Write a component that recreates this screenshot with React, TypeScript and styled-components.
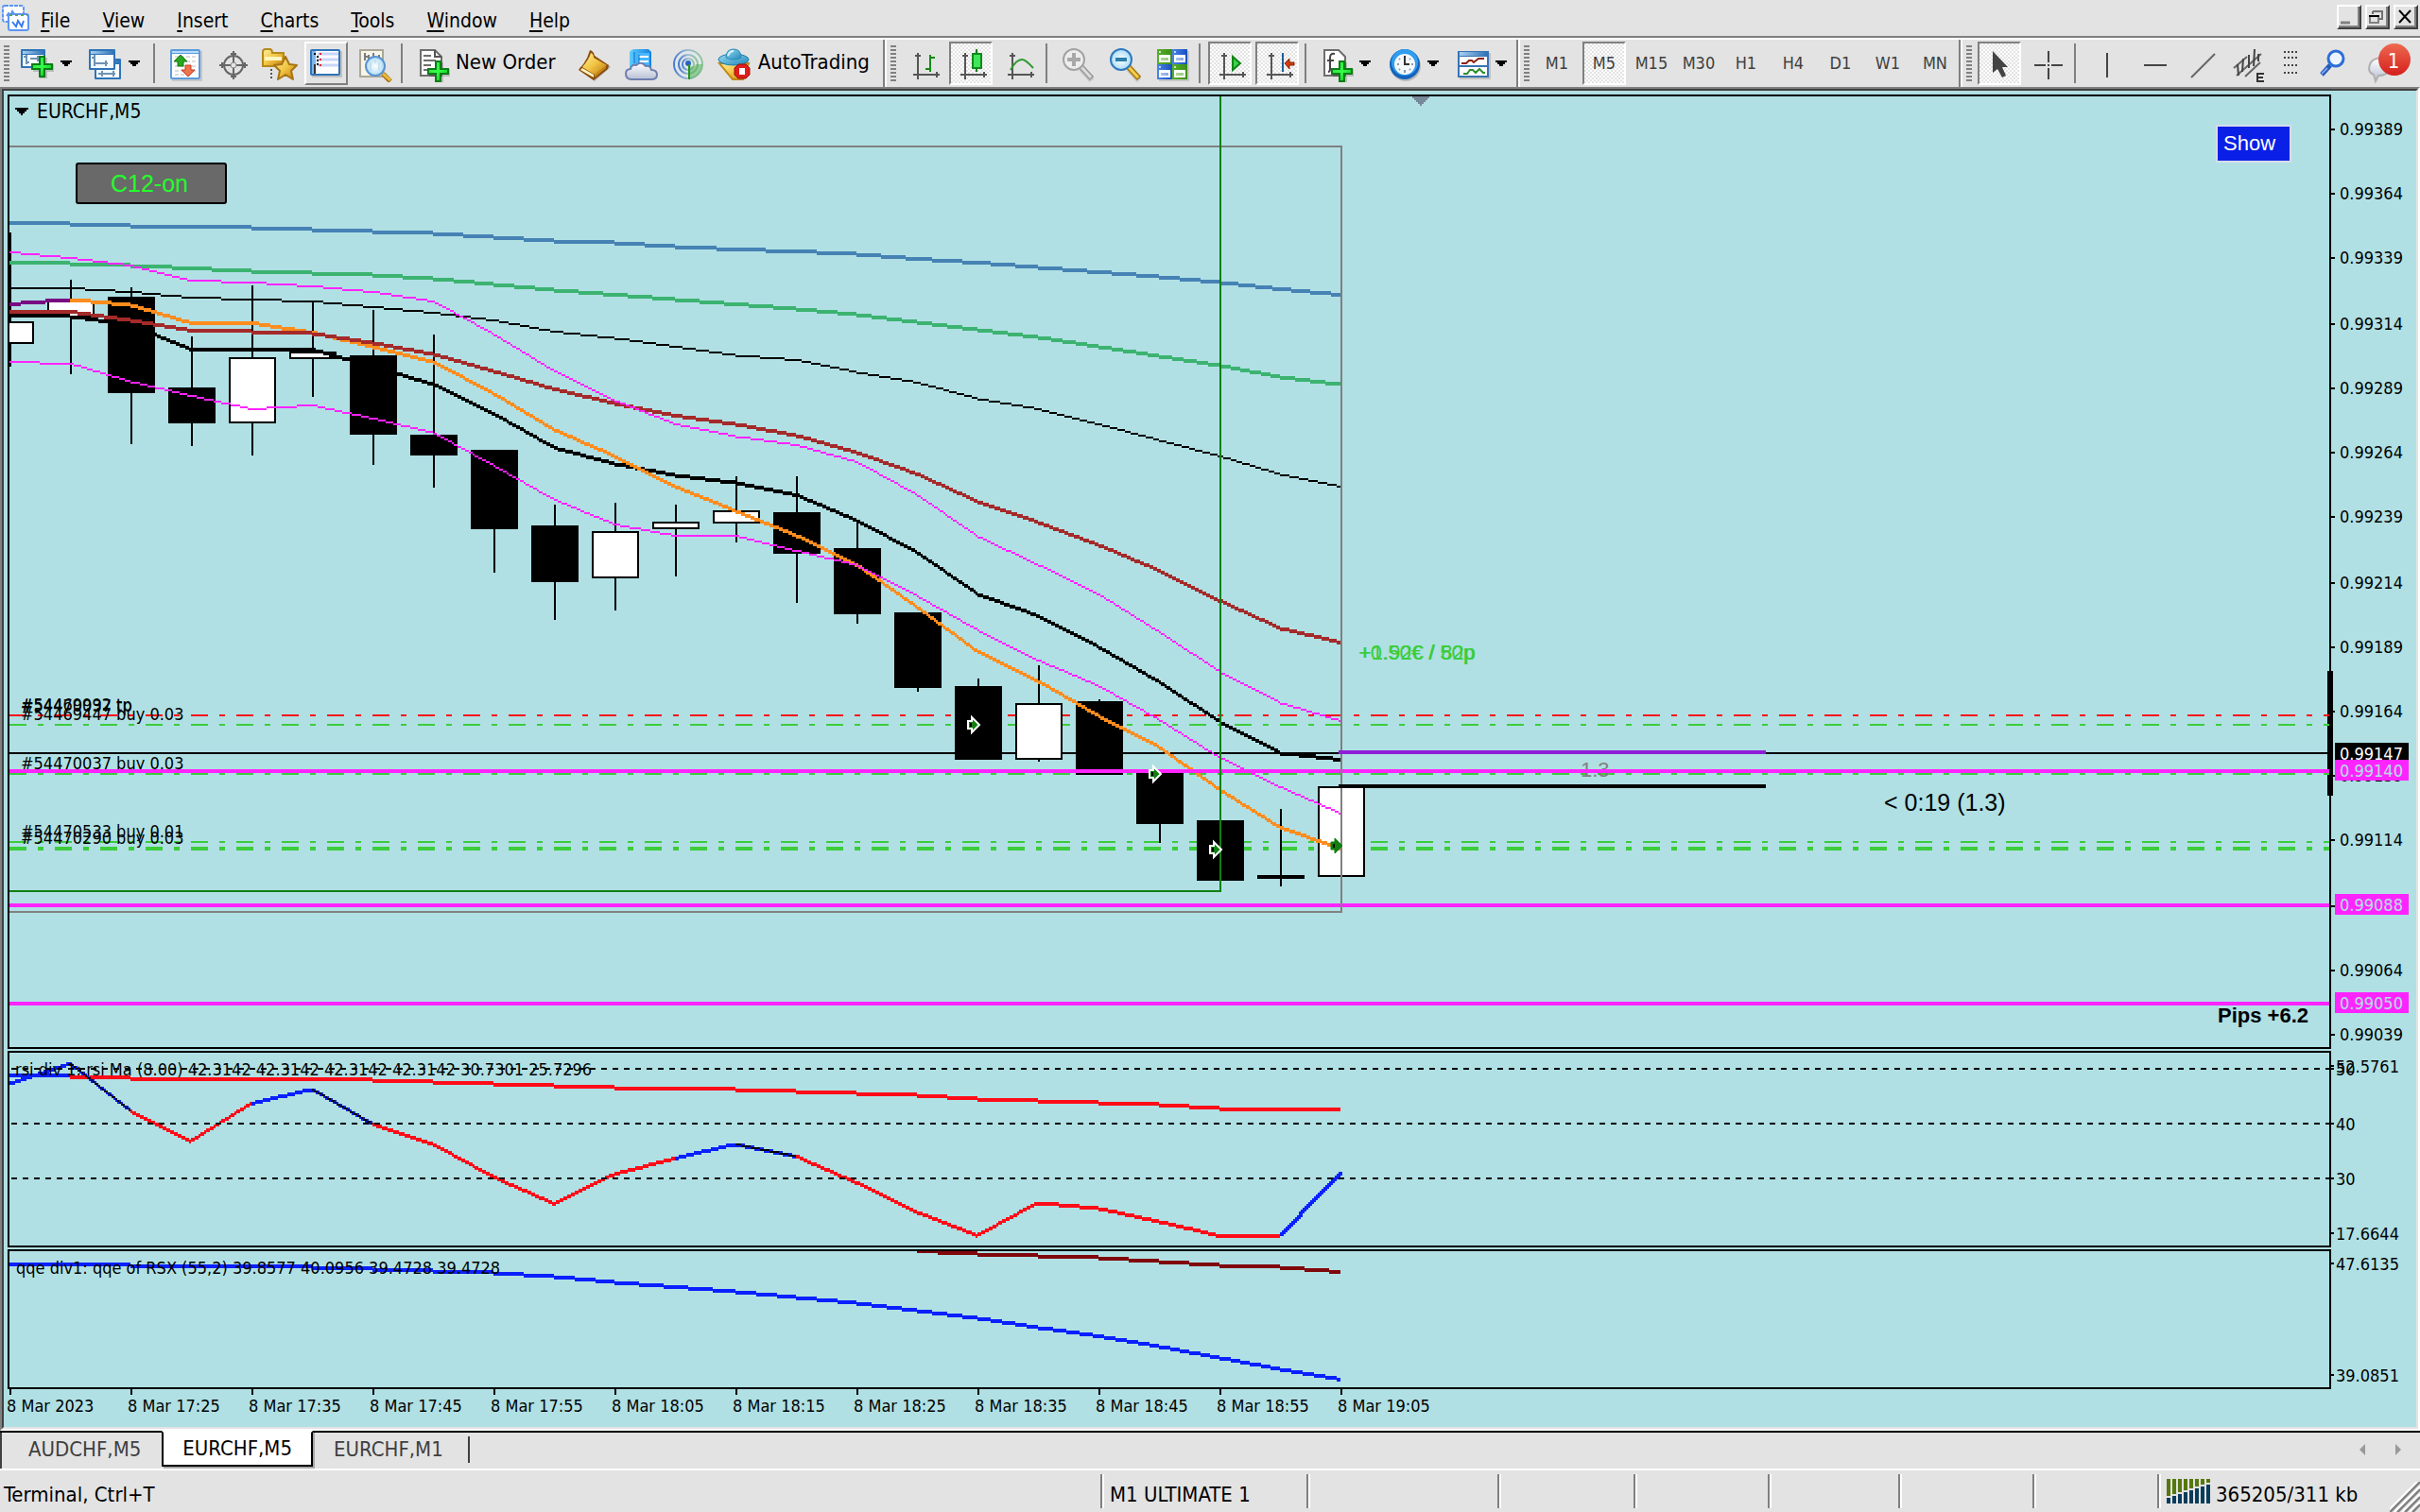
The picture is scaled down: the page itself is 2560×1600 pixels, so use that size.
import React from 'react';
import styled, { createGlobalStyle, css } from 'styled-components';

const UI_FONT = `"DejaVu Sans Condensed", "DejaVu Sans", Tahoma, sans-serif`;
const LABEL_FONT = `"Liberation Sans", Arial, sans-serif`;

const C = {
  face: '#e3e3e3',
  shade: '#808080',
  dark: '#404040',
  chart: '#b0e0e4',
  magenta: '#ff24ff',
  red: '#ff0c18',
  lime: '#3ccc3c',
  green: '#108010',
  blue: '#0a20ff',
};

const GlobalStyle = createGlobalStyle`
  *, *::before, *::after { box-sizing: border-box; }
  html, body { margin: 0; padding: 0; background: ${C.face}; }
  button { font: inherit; color: inherit; background: none; border: 0; padding: 0; margin: 0; cursor: default; }
`;

const Shell = styled.div`
  display: flex;
  flex-direction: column;
  min-height: 100vh;
  background: ${C.face};
  color: #000;
  font-family: ${UI_FONT};
  font-size: 22px;
  line-height: 26px;
`;

/* ---------- menu bar ---------- */

const MenuBar = styled.header`
  display: flex;
  align-items: center;
  height: 42px;
  padding: 0 2px 4px;
  border-bottom: 2px solid #fff;
  box-shadow: inset 0 -2px 0 ${C.shade};
`;

const AppIcon = styled.svg`
  width: 30px;
  height: 30px;
  flex: none;
`;

const MenuNav = styled.nav`
  display: flex;
  flex: 1;
  padding: 8px 0 0;
  margin-left: -6px;
  font-size: 21px;
`;

const MenuItem = styled.button`
  padding: 0 17px;
  white-space: nowrap;
`;

const Mnemonic = styled.span`
  text-decoration: underline;
  text-decoration-thickness: 2px;
  text-underline-offset: 3px;
`;

const MdiButtons = styled.div`
  display: flex;
  gap: 4px;
`;

const MdiButton = styled.button`
  width: 26px;
  height: 26px;
  background: ${C.face};
  border-style: solid;
  border-width: 2px;
  border-color: #fff ${C.dark} ${C.dark} #fff;
  box-shadow: inset -2px -2px 0 ${C.shade};
  svg { display: block; width: 22px; height: 22px; }
`;

/* ---------- toolbar ---------- */

const Toolbar = styled.div`
  display: flex;
  height: 50px;
`;

const Band = styled.div<{ $first?: boolean; $last?: boolean }>`
  display: flex;
  align-items: center;
  gap: 4px;
  padding: 0 2px 0 4px;
  border-left: ${p => (p.$first ? '0' : '2px solid #fff')};
  border-right: ${p => (p.$last ? '0' : `2px solid ${C.shade}`)};
  flex: ${p => (p.$last ? '1' : 'none')};
`;

const Grip = styled.div`
  width: 6px;
  height: 38px;
  margin-right: 2px;
  background: repeating-linear-gradient(${C.shade} 0 2px, transparent 2px 4px);
`;

const Divider = styled.div`
  width: 2px;
  height: 42px;
  margin: 0 4px 0 2px;
  background: ${C.shade};
`;

const pressedLook = css`
  border-color: ${C.shade} #fff #fff ${C.shade};
  background: repeating-conic-gradient(#fff 0 25%, ${C.face} 0 50%) 0 0 / 4px 4px;
`;

const ToolButton = styled.button<{ $w?: number; $look?: 'pressed' | 'raised' }>`
  display: flex;
  align-items: center;
  justify-content: center;
  flex: none;
  width: ${p => p.$w ?? 46}px;
  height: 46px;
  border: 2px solid transparent;
  svg { display: block; flex: none; }
  ${p => p.$look === 'pressed' && pressedLook}
  ${p => p.$look === 'raised' && css`border-color: #fff ${C.shade} ${C.shade} #fff;`}
`;

const DropButton = styled.button`
  display: flex;
  align-items: center;
  gap: 4px;
  width: 68px;
  height: 46px;
  padding-left: 4px;
  svg { display: block; flex: none; }
`;

const TextButton = styled.button`
  display: flex;
  align-items: center;
  gap: 4px;
  height: 46px;
  padding: 0 12px 0 4px;
  white-space: nowrap;
  svg { display: block; }
  span { padding-bottom: 2px; }
`;

const PeriodButton = styled(ToolButton)`
  font-size: 18px;
  color: ${C.dark};
`;

const Icon = ({ w = 40, children }: { w?: number; children: React.ReactNode }) => (
  <svg width={w} height={40} viewBox={`0 0 ${w} 40`} aria-hidden="true">{children}</svg>
);

const Caret = () => (
  <svg width="12" height="6" viewBox="0 0 12 6" aria-hidden="true" shapeRendering="crispEdges">
    <path d="M0 0h12v2h-2v2h-2v2h-4v-2h-2v-2h-2z" />
  </svg>
);

const GradientDefs = styled.svg`
  position: absolute;
  width: 0;
  height: 0;
`;

const Gradients = () => (
  <GradientDefs aria-hidden="true">
    <defs>
      <linearGradient id="gPlus" x1="0" y1="0" x2="1" y2="1"><stop offset="0" stopColor="#2fd83a" /><stop offset=".5" stopColor="#34ff48" /><stop offset="1" stopColor="#0fae1c" /></linearGradient>
      <linearGradient id="gBlueBar" x1="0" y1="0" x2="1" y2="0"><stop offset="0" stopColor="#a9d0f2" /><stop offset="1" stopColor="#2f74b8" /></linearGradient>
      <linearGradient id="gGold" x1="0" y1="0" x2="1" y2="1"><stop offset="0" stopColor="#fff0a0" /><stop offset=".5" stopColor="#f2c544" /><stop offset="1" stopColor="#b9770e" /></linearGradient>
      <linearGradient id="gCloud" x1="0" y1="0" x2="0" y2="1"><stop offset="0" stopColor="#ffffff" /><stop offset="1" stopColor="#b7bfd4" /></linearGradient>
      <linearGradient id="gServer" x1="0" y1="0" x2="1" y2="0"><stop offset="0" stopColor="#5ecbff" /><stop offset="1" stopColor="#1482dd" /></linearGradient>
      <linearGradient id="gSignal" x1="0" y1="0" x2="1" y2="0"><stop offset="0" stopColor="#4a7ccc" /><stop offset=".5" stopColor="#a3bdd0" /><stop offset="1" stopColor="#8fc49a" /></linearGradient>
      <radialGradient id="gLens"><stop offset="0" stopColor="#ffffff" /><stop offset="1" stopColor="#a9dcfa" /></radialGradient>
      <linearGradient id="gBadge" x1="0" y1="0" x2="0" y2="1"><stop offset="0" stopColor="#ee6a50" /><stop offset="1" stopColor="#d41f1c" /></linearGradient>
      <linearGradient id="gHat" x1="0" y1="0" x2="1" y2="1"><stop offset="0" stopColor="#9adcf5" /><stop offset="1" stopColor="#1f87b8" /></linearGradient>
      <linearGradient id="gTileG" x1="0" y1="0" x2="1" y2="0"><stop offset="0" stopColor="#56b02a" /><stop offset="1" stopColor="#3d8f16" /></linearGradient>
      <linearGradient id="gTileB" x1="0" y1="0" x2="1" y2="0"><stop offset="0" stopColor="#4a86e8" /><stop offset="1" stopColor="#164fc0" /></linearGradient>
    </defs>
  </GradientDefs>
);

const Plus = ({ x, y }: { x: number; y: number }) => (
  <g transform={`translate(${x} ${y})`}>
    <path d="M9 2h8v7h7v8h-7v7h-8v-7h-7v-8h7z" fill="#000" opacity=".18" />
    <path d="M8 0h7v8h8v7h-8v8h-7v-8h-8v-7h8z" fill="#0b7d17" />
    <path d="M10 2h3v8h8v3h-8v8h-3v-8h-8v-3h8z" fill="url(#gPlus)" />
  </g>
);

const MiniWindow = ({ x, y, w, h }: { x: number; y: number; w: number; h: number }) => (
  <g>
    <rect x={x} y={y} width={w} height={h} rx="1" fill="#2f74b8" />
    <rect x={x + 2} y={y + 2} width={w - 4} height="3" fill="url(#gBlueBar)" />
    <rect x={x + 2} y={y + 6} width={w - 4} height={h - 8} fill="#f6fbff" />
  </g>
);

const IconNewChart = () => (
  <Icon>
    <MiniWindow x={2} y={5} w={26} h={20} />
    <path d="M8 11v10M5 13h3M8 19h3M12 15h10M20 12v6" stroke="#6f93b3" strokeWidth="2" fill="none" />
    <Plus x={13} y={12} />
  </Icon>
);
const IconProfiles = () => (
  <Icon>
    <MiniWindow x={8} y={15} w={28} h={22} />
    <path d="M12 31h18M16 28v6M28 28v6" stroke="#6f93b3" strokeWidth="2" />
    <MiniWindow x={2} y={5} w={28} h={22} />
    <path d="M8 11v12M5 14h3M8 20h14M20 17v6" stroke="#6f93b3" strokeWidth="2" fill="none" />
  </Icon>
);
const IconMarketWatch = () => (
  <Icon>
    <rect x="7" y="7" width="32" height="32" fill="#000" opacity=".12" />
    <rect x="5" y="5" width="32" height="32" rx="2" fill="#5a9bdc" />
    <rect x="7" y="7" width="28" height="2" fill="#b5dbff" />
    <rect x="7" y="10" width="28" height="25" fill="#fff" />
    <path d="M10 13h22M10 18h22M10 23h22M10 28h22M10 32h12" stroke="#dcdcdc" strokeWidth="2" strokeDasharray="4 2" />
    <path d="M16 11l7 7h-4v5h-6v-5h-4z" fill="#2aa61f" stroke="#157a0e" />
    <path d="M24 34l7-7h-4v-5h-6v5h-4z" fill="#f0714c" stroke="#c43c1a" />
  </Icon>
);
const IconDataWindow = () => (
  <Icon>
    <g stroke="#666" fill="none" strokeWidth="2">
      <circle cx="22" cy="22" r="10" />
      <path d="M22 7v30M7 22h30" />
      <path d="M19 10h6M19 34h6M10 19v6M34 19v6" />
    </g>
    <circle cx="22" cy="22" r="3" fill="#e3e3e3" stroke="#888" />
  </Icon>
);
const IconNavigator = () => (
  <Icon>
    <path d="M3 8q0-3 3-3h4q3 0 3 4h12v14h-22z" fill="url(#gGold)" stroke="#b58a1c" strokeWidth="2" />
    <path d="M5 13h18v4h-18z" fill="#fff6bf" />
    <path d="M12 26v12" stroke="#555" strokeWidth="2" strokeDasharray="2 2" />
    <path d="M27 13l4 8 8 1-6 6 2 9-8-5-8 5 2-9-6-6 8-1z" fill="url(#gGold)" stroke="#a87412" strokeWidth="2" strokeLinejoin="round" />
  </Icon>
);
const IconTerminal = () => (
  <Icon>
    <rect x="5" y="7" width="32" height="28" fill="#000" opacity=".15" />
    <rect x="3" y="5" width="32" height="28" rx="2" fill="#2f74b8" />
    <rect x="5" y="7" width="28" height="24" fill="#fff" />
    <rect x="5" y="7" width="4" height="24" fill="#7fb6ea" />
    <rect x="7" y="21" width="2" height="10" fill="#333" />
    <path d="M11 10h22M11 16h22M11 22h22" stroke="#c9d6fb" strokeWidth="3" />
    <path d="M7 10h2M11 12v10" stroke="#000" strokeWidth="2" strokeDasharray="2 2" />
    <path d="M13 10h2M13 16h2M13 22h2" stroke="#e8202a" strokeWidth="2" />
  </Icon>
);
const IconTester = () => (
  <Icon>
    <rect x="6" y="6" width="24" height="28" fill="#f7f5ea" stroke="#aca695" strokeWidth="2" />
    <path d="M11 9v8M15 11v6M20 9v6M26 11v4M10 13h5" stroke="#7c7c7c" strokeWidth="2" />
    <path d="M30 31l8 8" stroke="#96650a" strokeWidth="5" />
    <path d="M30 31l8 7" stroke="#e9b93a" strokeWidth="3" />
    <circle cx="22" cy="23" r="10" fill="url(#gLens)" fillOpacity=".92" stroke="#5b93d0" strokeWidth="2" />
    <path d="M17 19v9M22 16v4M26 19v8" stroke="#b9cfe0" strokeWidth="1" />
  </Icon>
);
const PageShape = ({ x }: { x: number }) => (
  <path d={`M${x + 1} 6h15l7 7v20h-22z`} fill="#fdfdfd" stroke="#6e6e6e" strokeWidth="2" />
);
const IconNewOrder = () => (
  <Icon>
    <PageShape x={6} />
    <path d="M22 6v7h7" stroke="#555" strokeWidth="2" fill="none" />
    <path d="M10 12h8M10 17h13M10 22h8M10 27h5" stroke="#6e6e6e" strokeWidth="2" />
    <Plus x={14} y={17} />
  </Icon>
);
const IconEditor = () => (
  <Icon>
    <path d="M7 28l15 11 17-15-3-3z" fill="#000" opacity=".2" />
    <path d="M17 6q4 1 5 6l15 10-1 4-15 12-16-11q1-2 5-6 5-7 7-15z" fill="#8a4d08" />
    <path d="M18 9q3 1 3 5l14 8-13 10-13-8q7-8 9-15z" fill="url(#gGold)" />
    <path d="M7 27l14 8v-3l-12-7z" fill="#fff2c0" />
    <path d="M22 35l12-10v-2l-12 9z" fill="#c98a1a" />
  </Icon>
);
const IconServer = () => (
  <Icon>
    <path d="M9 8q2-3 5-3h15l3 3v18h-23z" fill="url(#gServer)" />
    <path d="M17 9h13v17h-13z" fill="#48b6ff" />
    <path d="M19 13h10M19 18h10" stroke="#fff" strokeWidth="2" />
    <path d="M19 11v11M14 8v12" stroke="#0d6fc6" strokeWidth="1" />
    <path d="M11 37q-6 0-6-6 0-5 5-5 1-5 6-4 5-5 10 1 5-1 6 4 6 0 6 5t-6 5z" fill="url(#gCloud)" stroke="#6f7fae" strokeWidth="2" />
  </Icon>
);
const IconSignals = () => (
  <Icon>
    <circle cx="21" cy="21" r="16" fill="#dfeaf0" opacity=".7" />
    <g fill="none" stroke="url(#gSignal)" strokeWidth="2">
      <circle cx="21" cy="21" r="15" /><circle cx="21" cy="21" r="10" /><circle cx="21" cy="21" r="6" />
    </g>
    <path d="M22 22v15q12-2 14-16h-7q-1 5-7 1z" fill="#46ad46" opacity=".5" />
    <circle cx="21" cy="20" r="3" fill="#2a62c8" />
    <path d="M22 21v16" stroke="#22961f" strokeWidth="2" />
  </Icon>
);
const IconAutoTrading = () => (
  <Icon>
    <path d="M3 20h31l-6 17h-11z" fill="url(#gGold)" stroke="#c08a18" strokeWidth="2" />
    <ellipse cx="18" cy="16" rx="16" ry="6" fill="url(#gHat)" stroke="#1f7ba8" strokeWidth="1" />
    <path d="M10 14q0-9 8-9t8 9q-8 4-16 0z" fill="url(#gHat)" stroke="#2b8ab5" strokeWidth="1" />
    <path d="M12 12q2-5 6-5" stroke="#d8f4ff" strokeWidth="2" fill="none" />
    <path d="M23 21h8l4 4v7l-4 4h-8l-4-4v-7z" fill="#e0201c" stroke="#a30f0c" strokeWidth="1" />
    <rect x="24" y="25" width="6" height="7" fill="#fff" />
  </Icon>
);

const Axes = () => (
  <path d="M14 9v28M9 32h28M11 12h6M34 29v6" stroke="#555" strokeWidth="2" fill="none" shapeRendering="crispEdges" />
);
const IconBars = () => (
  <Icon><Axes /><path d="M27 11v18M27 14h5M22 26h5" stroke="#148a14" strokeWidth="2" fill="none" shapeRendering="crispEdges" /></Icon>
);
const IconCandles = () => (
  <Icon><Axes /><path d="M26 5v24" stroke="#0f7a16" strokeWidth="2" /><rect x="22" y="10" width="9" height="15" fill="#3fe65a" stroke="#0f8a1a" strokeWidth="2" /></Icon>
);
const IconLine = () => (
  <Icon><Axes /><path d="M12 27q6-11 12-11 4 0 12 9" stroke="#2f9a2f" strokeWidth="2" fill="none" /></Icon>
);
const Magnifier = ({ on }: { on: boolean }) => (
  <Icon>
    <path d="M25 26l11 12" stroke="#000" opacity=".12" strokeWidth="6" />
    <path d="M25 24l11 12" stroke={on ? '#a9740f' : '#9a9a9a'} strokeWidth="6" />
    <path d="M25 24l10 11" stroke={on ? '#f3cf4b' : '#dcdcdc'} strokeWidth="3" />
    <circle cx="17" cy="16" r="11" fill={on ? 'url(#gLens)' : '#ededed'} stroke={on ? '#2f79bd' : '#a3a3a3'} strokeWidth="2" />
    {on ? <path d="M11 16h12" stroke="#2b7fa8" strokeWidth="4" /> : <path d="M10 16h14M17 9v14" stroke="#a8a8a8" strokeWidth="4" />}
  </Icon>
);
const Tile = ({ x, y, g }: { x: number; y: number; g: string }) => (
  <g>
    <rect x={x} y={y} width="16" height="16" fill={`url(#${g})`} />
    <rect x={x + 2} y={y + 2} width="2" height="2" fill="#fff" opacity=".7" />
    <rect x={x + 2} y={y + 6} width="12" height="8" fill="#fff" />
    <rect x={x + 4} y={y + 9} width="8" height="3" fill={`url(#${g})`} opacity=".5" />
  </g>
);
const IconTile = () => (
  <Icon>
    <rect x="7" y="7" width="32" height="32" fill="#000" opacity=".12" />
    <Tile x={5} y={5} g="gTileG" /><Tile x={21} y={5} g="gTileB" /><Tile x={5} y={21} g="gTileB" /><Tile x={21} y={21} g="gTileG" />
  </Icon>
);
const IconAutoScroll = () => (
  <Icon><Axes /><path d="M23 13v14l8-7z" fill="#3fd04a" stroke="#118518" strokeWidth="2" /></Icon>
);
const IconShift = () => (
  <Icon><Axes /><path d="M26 9v20" stroke="#1d5f96" strokeWidth="2" /><path d="M28 20l5-5v4h5v3h-5v4z" fill="#cf3d12" stroke="#8b2308" strokeWidth="1" /></Icon>
);
const IconIndicators = () => (
  <Icon>
    <PageShape x={6} />
    <path d="M18 10q-5-1-5 4v12q0 3-2 3M10 17h7" stroke="#444" strokeWidth="2" fill="none" />
    <Plus x={14} y={17} />
  </Icon>
);
const IconPeriods = () => (
  <Icon>
    <ellipse cx="21" cy="23" rx="16" ry="16" fill="#000" opacity=".18" />
    <circle cx="20" cy="21" r="16" fill="#1463bd" />
    <circle cx="20" cy="19" r="14" fill="#2f9df0" />
    <circle cx="20" cy="21" r="11" fill="#f4f8fb" />
    <path d="M20 12v9h5" stroke="#333" strokeWidth="2" fill="none" />
    <path d="M20 27v3M12 21h2M27 21h2M14 15l1 1M26 15l-1 1M14 27l1-1M26 27l-1-1" stroke="#8a9aa8" strokeWidth="2" />
  </Icon>
);
const IconTemplates = () => (
  <Icon>
    <rect x="6" y="9" width="33" height="28" fill="#000" opacity=".15" />
    <rect x="4" y="7" width="33" height="28" fill="#3873b3" />
    <rect x="6" y="8" width="29" height="4" fill="url(#gBlueBar)" />
    <rect x="6" y="13" width="29" height="9" fill="#fff" />
    <rect x="6" y="24" width="29" height="9" fill="#fff" />
    <path d="M8 20h5l3-3h3l2 2 5-4h6" stroke="#8a2313" strokeWidth="2" fill="none" />
    <path d="M10 31h4l3-4h3l3 3 4-4 4 4h2" stroke="#2c8f2c" strokeWidth="2" fill="none" />
  </Icon>
);
const IconCursor = () => (
  <Icon><path d="M13 7v23l5-4 5 9 4-2-4-9h6z" fill="#444" /></Icon>
);
const IconCross = () => (
  <Icon><path d="M22 7v12M22 25v12M7 22h12M25 22h12M21 22h2" stroke="#444" strokeWidth="2" shapeRendering="crispEdges" /></Icon>
);
const IconVLine = () => (<Icon><path d="M22 9v26" stroke="#444" strokeWidth="2" shapeRendering="crispEdges" /></Icon>);
const IconHLine = () => (<Icon><path d="M11 22h24" stroke="#444" strokeWidth="2" shapeRendering="crispEdges" /></Icon>);
const IconTrend = () => (<Icon><path d="M11 35l25-25" stroke="#666" strokeWidth="2" /></Icon>);
const IconChannel = () => (
  <Icon>
    <path d="M6 25l14-12M9 33l26-23M18 34l16-15" stroke="#666" strokeWidth="2" />
    <path d="M10 21l1 12M16 15l-1 14M22 11v14M28 5l-1 18M32 10v8" stroke="#444" strokeWidth="2" />
    <path d="M38 31h-7v8h7M31 35h6" stroke="#333" strokeWidth="2" fill="none" shapeRendering="crispEdges" />
  </Icon>
);
const IconFibo = () => (
  <Icon w={30}>
    <path d="M9 8h14M9 14h14M9 22h14M9 30h14" stroke="#444" strokeWidth="2" strokeDasharray="2 2" shapeRendering="crispEdges" />
  </Icon>
);
const IconSearch = () => (
  <Icon>
    <path d="M18 22l-9 10" stroke="#2659b8" strokeWidth="5" />
    <path d="M15 25l-6 6" stroke="#7ba5ea" strokeWidth="2" />
    <circle cx="24" cy="15" r="8" fill="#eef4ff" stroke="#2b6fd6" strokeWidth="3" />
  </Icon>
);
const IconAlerts = () => (
  <svg width="60" height="46" viewBox="0 0 60 46" aria-hidden="true">
    <path d="M14 22q5-6 14-4 8 3 6 12-3 6-12 6l-3 6-2-7q-8-3-3-13z" fill="url(#gCloud)" stroke="#b0b0b0" strokeWidth="2" />
    <circle cx="39" cy="19" r="17" fill="url(#gBadge)" />
    <text x="38" y="28" fill="#fff" textAnchor="middle" fontFamily={UI_FONT} fontSize="22">1</text>
  </svg>
);

/* ---------- chart window ---------- */

const WindowEdge = styled.div`
  display: flex;
  flex-direction: column;
  flex: 1;
  border-style: solid;
  border-width: 2px;
  border-color: ${C.shade} #fff #fff ${C.shade};
`;

const ChartWindow = styled.main`
  display: flex;
  flex-direction: column;
  flex: 1;
  min-height: 600px;
  padding: 4px 0 0 4px;
  background: ${C.chart};
  border-style: solid;
  border-width: 2px;
  border-color: ${C.dark} ${C.face} ${C.face} ${C.dark};
`;

const Pane = styled.section<{ $h?: number; $last?: boolean }>`
  display: flex;
  flex: ${p => (p.$h ? `0 0 ${p.$h}px` : '1')};
  min-height: 0;
  margin-bottom: ${p => (p.$last ? 0 : 2)}px;
`;

const Plot = styled.div`
  position: relative;
  flex: 1;
  min-width: 0;
  border: 2px solid #000;
  & > svg { position: absolute; inset: 0; width: 100%; height: 100%; }
`;

const Scale = styled.svg`
  flex: none;
  width: 90px;
  height: 100%;
  overflow: visible;
`;

const TimeScale = styled.svg`
  display: block;
  flex: none;
  width: 100%;
  height: 40px;
`;

const Caption = styled.text`
  font-family: ${UI_FONT};
  font-size: 18px;
`;

const Note = styled.text<{ $size?: number; $bold?: boolean }>`
  font-family: ${LABEL_FONT};
  font-size: ${p => p.$size ?? 22}px;
  font-weight: ${p => (p.$bold ? 700 : 400)};
`;

const ChartTitle = styled.div`
  position: absolute;
  left: 6px;
  top: 3px;
  display: flex;
  align-items: center;
  gap: 9px;
  font-size: 21px;
`;

const PanelToggle = styled.button`
  position: absolute;
  left: 70px;
  top: 70px;
  width: 160px;
  height: 44px;
  padding-right: 4px;
  border: 2px solid #000;
  border-radius: 3px;
  background: #696969;
  color: #24ff2c;
  font-family: ${LABEL_FONT};
  font-size: 25px;
`;

const ShowButton = styled.button`
  position: absolute;
  right: 40px;
  top: 30px;
  width: 80px;
  height: 40px;
  padding-left: 6px;
  border: 2px solid #d6dcec;
  background: #0a20e6;
  color: #fff;
  font-family: ${LABEL_FONT};
  font-size: 22px;
  text-align: left;
`;

/* Bars are 64px apart; the chart draws on a 2px grid. */
const barX = (i: number) => 11 + 64 * i;
const snap = (v: number) => Math.round(v / 2) * 2;

function stepPath(values: number[], thick: number, from = 0) {
  let d = '';
  for (let i = 0; i < values.length - 1; i++) {
    const x0 = snap(barX(from + i) - 1);
    const step = (values[i + 1] - values[i]) / 32;
    const wide = Math.abs(step) > 2 ? thick : 2;
    for (let n = 0; n < 32; n++) {
      const a = values[i] + step * n;
      const b = a + step;
      const lo = snap(Math.min(a, b) - thick / 2);
      const hi = Math.max(snap(Math.max(a, b) - thick / 2), lo + 2) - 2;
      d += `M${x0 + n * 2} ${lo}h${wide}v${hi - lo + thick}h${-wide}z`;
    }
  }
  return d;
}

const Series = ({ v, color, w = 4, from = 0 }: { v: number[]; color: string; w?: number; from?: number }) => (
  <path d={stepPath(v, w, from)} fill={color} shapeRendering="crispEdges" />
);

type Candle = [number, number, number, number, 0 | 1]; // high, top, bottom, low, rising
const CANDLES: Candle[] = [
  [246, 340, 364, 388, 1], [296, 318, 336, 396, 1], [304, 314, 416, 470, 0], [356, 410, 448, 472, 0],
  [302, 378, 448, 482, 1], [318, 372, 380, 420, 1], [328, 376, 460, 492, 0], [354, 460, 482, 516, 0],
  [476, 476, 560, 606, 0], [534, 556, 616, 656, 0], [532, 562, 612, 646, 1], [534, 552, 560, 610, 1],
  [504, 540, 554, 574, 1], [504, 542, 586, 638, 0], [550, 580, 650, 660, 0], [648, 648, 728, 732, 0],
  [718, 726, 804, 804, 0], [704, 744, 804, 806, 1], [740, 742, 820, 820, 0], [816, 816, 872, 892, 0],
  [868, 868, 932, 932, 0], [856, 926, 930, 938, 0], [832, 832, 928, 928, 1],
];

const MA_BLUE = [235, 237, 239, 240, 241, 243, 245, 247, 251, 255, 257, 261, 264, 266, 269, 274, 278, 283, 288, 293, 299, 306, 312];
const MA_GREEN = [278, 279, 281, 284, 287, 289, 291, 295, 301, 307, 312, 317, 322, 327, 333, 341, 349, 357, 367, 377, 387, 399, 407];
const MA_THIN = [305, 305, 309, 315, 317, 319, 325, 331, 339, 351, 358, 367, 376, 381, 394, 405, 422, 433, 449, 466, 483, 502, 515];
const BAND_UP = [267, 273, 281, 297, 299, 303, 309, 319, 354, 393, 424, 449, 462, 471, 489, 524, 568, 598, 629, 669, 711, 744, 763];
const BAND_LOW = [383, 385, 404, 419, 433, 429, 443, 458, 493, 529, 555, 567, 567, 583, 598, 631, 667, 699, 726, 762, 802, 833, 861];
const MA_ORANGE = [317, 323, 342, 342, 352, 367, 383, 417, 455, 483, 515, 541, 567, 598, 643, 690, 721, 758, 791, 836, 876, 898];
const MA_BROWN = [330, 330, 339, 350, 351, 353, 363, 375, 393, 412, 427, 440, 449, 461, 479, 502, 531, 553, 577, 604, 636, 665, 680];
const MA_BLACK = [334, 335, 344, 370, 370, 370, 388, 407, 438, 474, 491, 503, 511, 524, 551, 585, 629, 652, 685, 722, 764, 797, 804];

const RSI = [1147, 1126, 1176, 1208, 1168, 1153, 1190, 1211, 1246, 1274, 1243, 1226, 1211, 1224, 1252, 1283, 1308, 1273, 1279, 1293, 1308, 1308, 1241];
const RSI_MA = [1140, 1141, 1141, 1142, 1142, 1143, 1145, 1147, 1149, 1151, 1152, 1153, 1155, 1157, 1159, 1163, 1165, 1167, 1169, 1173, 1174, 1174];
const QQE = [1338, 1338, 1339, 1340, 1340, 1341, 1343, 1345, 1347, 1351, 1357, 1362, 1367, 1373, 1379, 1387, 1395, 1405, 1414, 1425, 1437, 1449, 1460];
const QQE_SLOW = [1324, 1327, 1329, 1331, 1335, 1339, 1341, 1346];

const Marker = ({ x, y, halo = true }: { x: number; y: number; halo?: boolean }) => (
  <g transform={`translate(${x} ${y})`}>
    <path d="M-6 -4h4v-4l8 8-8 8v-4h-4z" fill={C.green} stroke={halo ? '#fff' : C.green} strokeWidth={halo ? 2 : 1} />
    <path d="M-4 -2h2v4h-2z" fill="#000" />
  </g>
);

/* Plot groups are shifted left, so full-width lines run a little past 100%. */
const HLine = ({ y, color, w = 2, dash }: { y: number; color: string; w?: number; dash?: string }) => (
  <line x1="10" x2="101%" y1={y} y2={y} stroke={color} strokeWidth={w} strokeDasharray={dash} />
);

const DASH_DOT = '18 12 6 12';

const PricePlot = () => (
  <svg aria-label="EURCHF M5 price chart">
    <g transform="translate(-10 -102)">
      <g shapeRendering="crispEdges">
        <path d="M1494 102h18v2h-2v2h-2v2h-2v2h-2v2h-2v-2h-2v-2h-2v-2h-2v-2h-2z" fill="#778899" />
        <HLine y={757} color={C.red} dash={DASH_DOT} />
        <HLine y={767} color={C.lime} dash={DASH_DOT} />
        <HLine y={819} color={C.lime} dash={DASH_DOT} />
        <HLine y={891} color={C.lime} dash={DASH_DOT} />
        <HLine y={898} color={C.lime} w={4} dash={DASH_DOT} />
        <HLine y={797} color="#000" />
        {CANDLES.map(([hi, top, bot, lo, up], i) => (
          <g key={i}>
            <path d={`M${barX(i)} ${hi}V${lo}`} stroke="#000" strokeWidth="2" />
            <rect x={barX(i) - 24} y={top + 1} width="48" height={Math.max(bot - top - 2, 1)} fill={up ? '#fff' : '#000'} stroke="#000" strokeWidth="2" />
          </g>
        ))}
      </g>
      <Series v={MA_BLUE} color="#4682b4" />
      <Series v={MA_GREEN} color="#3cb371" />
      <Series v={MA_THIN} color="#000" w={2} />
      <Series v={MA_BLACK} color="#000" />
      <Series v={[322, 317]} color="#780a82" />
      <Series v={MA_ORANGE} color="#ff8c1e" from={1} />
      <Series v={MA_BROWN} color="#a52a2a" />
      <Series v={BAND_UP} color={C.magenta} w={2} />
      <Series v={BAND_LOW} color={C.magenta} w={2} />
      <Note x="1672" y="822" fill="#808080">1.3</Note>
      <Caption x="22" y="752">#54469992 tp</Caption>
      <Caption x="22" y="753">#54470037 tp</Caption>
      <Caption x="22" y="762">#54469447 buy 0.03</Caption>
      <Caption x="22" y="814">#54470037 buy 0.03</Caption>
      <Caption x="22" y="886">#54470533 buy 0.01</Caption>
      <Caption x="22" y="893">#54470290 buy 0.03</Caption>
      <g shapeRendering="crispEdges">
        <HLine y={816} color={C.magenta} w={4} />
        <HLine y={958} color={C.magenta} w={4} />
        <HLine y={1062} color={C.magenta} w={4} />
        <path d="M0 155H1419V965H0" fill="none" stroke="#808080" strokeWidth="2" />
        <path d="M1291 102V943H0" fill="none" stroke={C.green} strokeWidth="2" />
        <path d="M1416 796h452" stroke="#8e1fd6" strokeWidth="4" />
        <path d="M1416 832h452" stroke="#000" strokeWidth="4" />
      </g>
      <Marker x={1030} y={767} />
      <Marker x={1222} y={819} />
      <Marker x={1286} y={899} />
      <Marker x={1414} y={895} halo={false} />
      <Note x="1437" y="698" fill={C.lime}>+0.50€ / 50p</Note>
      <Note x="1438" y="698" fill={C.lime}>+1.92€ / 82p</Note>
      <Note x="1993" y="858" $size={25}>&lt; 0:19 (1.3)</Note>
      <Note x="2346" y="1082" $bold>Pips +6.2</Note>
    </g>
  </svg>
);

const PRICES = [389, 364, 339, 314, 289, 264, 239, 214, 189, 164, 139, 114, 89, 64, 39];
const TAGS: [number, string, string, string][] = [
  [797, '0.99147', '#000', '#fff'],
  [815, '0.99140', C.magenta, C.chart],
  [957, '0.99088', C.magenta, C.chart],
  [1061, '0.99050', C.magenta, C.chart],
];

const PriceScale = () => (
  <Scale aria-label="Price scale">
    <g transform="translate(0 -100)">
      {PRICES.map((p, i) => {
        const y = snap(136 + (i * 958) / 14) + 1;
        return (
          <g key={p}>
            <rect x="0" y={y - 1} width="4" height="2" />
            {p !== 89 && <Caption x="9" y={y + 6}>{`0.99${String(p).padStart(3, '0')}`}</Caption>}
          </g>
        );
      })}
      <rect x="-4" y="710" width="6" height="132" />
      {TAGS.map(([y, label, bg, fg]) => (
        <g key={label}>
          <rect x="4" y={y - 11} width="78" height="22" fill={bg} />
          <Caption x="9" y={y + 7} fill={fg}>{label}</Caption>
        </g>
      ))}
    </g>
  </Scale>
);

const Level = ({ y }: { y: number }) => (
  <line x1="12" x2="101%" y1={y} y2={y} stroke="#000" strokeWidth="2" strokeDasharray="6 6" />
);

const BLACK_CORES = [1, 5, 12];
const BLUE_RUNS = [0, 1, 4, 5, 11, 12, 21];

const RsiPlot = () => (
  <svg aria-label="RSI indicator">
    <g transform="translate(-10 -1114)">
      <Series v={[1138, 1138]} color={C.blue} />
      <Series v={RSI_MA} color={C.red} from={1} />
      {RSI.slice(0, -1).map((v, i) => (
        <React.Fragment key={i}>
          <Series v={[v, RSI[i + 1]]} color={BLUE_RUNS.includes(i) ? C.blue : C.red} from={i} />
          {BLACK_CORES.includes(i) && <Series v={[v, RSI[i + 1]]} color="#000" w={2} from={i} />}
        </React.Fragment>
      ))}
      <g shapeRendering="crispEdges"><Level y={1131} /><Level y={1189} /><Level y={1247} /></g>
      <Caption x="16" y="1138">rsi div 1: rsi Ma (8.00) 42.3142 42.3142 42.3142 42.3142 30.7301 25.7296</Caption>
    </g>
  </svg>
);

const QqePlot = () => (
  <svg aria-label="QQE indicator">
    <g transform="translate(-10 -1324)">
      <Series v={QQE} color={C.blue} />
      <Series v={QQE_SLOW} color="#80080c" from={15} />
      <Caption x="17" y="1348">qqe div1: qqe of RSX (55,2) 39.8577 40.0956 39.4728 39.4728</Caption>
    </g>
  </svg>
);

const ScaleLabels = ({ top, items }: { top: number; items: [number, string][] }) => (
  <Scale>
    <g transform={`translate(0 ${-top})`}>
      {items.map(([y, t]) => <Caption key={t} x="5" y={y + 7}>{t}</Caption>)}
      {items.map(([y, t]) => <rect key={t} x="0" y={y - 1} width="3" height="2" />)}
    </g>
  </Scale>
);

const TIMES = ['8 Mar 2023', '8 Mar 17:25', '8 Mar 17:35', '8 Mar 17:45', '8 Mar 17:55', '8 Mar 18:05', '8 Mar 18:15', '8 Mar 18:25', '8 Mar 18:35', '8 Mar 18:45', '8 Mar 18:55', '8 Mar 19:05'];

/* ---------- tabs and status bar ---------- */

const TabStrip = styled.div`
  display: flex;
  align-items: flex-start;
  height: 42px;
  padding: 0 4px 0 8px;
  border-top: 2px solid #000;
  border-bottom: 2px solid #fff;
  box-shadow: inset 2px 0 0 ${C.dark};
`;

const Tab = styled.button<{ $active?: boolean }>`
  height: 36px;
  padding: 0 22px;
  color: ${C.dark};
  ${p => p.$active && css`
    height: 38px;
    margin-top: -2px;
    padding: 0 20px;
    background: #fff;
    color: #000;
    border: 2px solid #000;
    border-top-color: #fff;
    box-shadow: 2px 2px 0 #a8a8a8;
  `}
`;

const TabEnd = styled.div`
  width: 2px;
  height: 28px;
  margin: 4px auto 0 4px;
  background: ${C.dark};
`;

const TabScroll = styled.button`
  width: 38px;
  height: 36px;
  svg { display: block; margin: 0 auto; }
`;

const StatusBar = styled.footer`
  display: flex;
  align-items: center;
  height: 44px;
`;

const StatusCell = styled.div<{ $w?: number; $first?: boolean }>`
  display: flex;
  align-items: center;
  gap: 6px;
  flex: ${p => (p.$w ? `0 0 ${p.$w}px` : '1')};
  height: 36px;
  padding: 8px 0 0 ${p => (p.$first ? 4 : 8)}px;
  white-space: nowrap;
  border-left: ${p => (p.$first ? '0' : `2px solid ${C.shade}`)};
  box-shadow: ${p => (p.$first ? 'none' : 'inset 2px 0 0 #fff')};
  svg { margin-bottom: 8px; }
`;

const SizeGrip = styled.svg`
  align-self: flex-end;
  flex: none;
  width: 32px;
  height: 32px;
`;

const Traffic = () => (
  <svg width="46" height="26" viewBox="0 0 46 26" aria-hidden="true" shapeRendering="crispEdges">
    {Array.from({ length: 8 }, (_, i) => (
      <g key={i}>
        <rect x={i * 6} y="0" width="4" height={18 - 2 * i} fill="#56780e" />
        <rect x={i * 6} y={20 - 2 * i} width="4" height={6 + 2 * i} fill="#083c5c" />
      </g>
    ))}
  </svg>
);

const MENUS = ['File', 'View', 'Insert', 'Charts', 'Tools', 'Window', 'Help'];
const PERIODS = ['M1', 'M5', 'M15', 'M30', 'H1', 'H4', 'D1', 'W1', 'MN'];

export default function App() {
  return (
    <Shell>
      <GlobalStyle />
      <Gradients />
      <MenuBar>
        <AppIcon viewBox="0 0 30 30" aria-hidden="true">
          <g fill="#fff" stroke="#5b95f5" strokeWidth="2">
            <rect x="1" y="3" width="22" height="17" rx="2" strokeDasharray="4 1" />
            <path d="M5 14l2-3 2 3 2-5 3 4" fill="none" />
            <rect x="7" y="12" width="21" height="17" rx="2" />
          </g>
          <path d="M8 13h19" stroke="#5aa06a" strokeWidth="2" strokeDasharray="3 3" />
          <path d="M11 20l4 5 2-6 4 6 2-6" stroke="#3a7af0" strokeWidth="2" fill="none" />
        </AppIcon>
        <MenuNav aria-label="Main menu">
          {MENUS.map(m => (
            <MenuItem key={m} type="button"><Mnemonic>{m[0]}</Mnemonic>{m.slice(1)}</MenuItem>
          ))}
        </MenuNav>
        <MdiButtons>
          <MdiButton type="button" aria-label="Minimize"><svg viewBox="0 0 22 22"><path d="M2 17h10" stroke="#808080" strokeWidth="3" /></svg></MdiButton>
          <MdiButton type="button" aria-label="Restore">
            <svg viewBox="0 0 22 22" fill="none" strokeWidth="2"><path d="M6 5h10v8h-3M6 5v3" stroke="#707070" /><path d="M3 10h9v7h-9z" stroke="#808080" /><path d="M2 10h11" stroke="#000" /></svg>
          </MdiButton>
          <MdiButton type="button" aria-label="Close"><svg viewBox="0 0 22 22"><path d="M4 4l12 13M16 4l-12 13" stroke="#000" strokeWidth="2" /></svg></MdiButton>
        </MdiButtons>
      </MenuBar>

      <Toolbar role="toolbar">
        <Band $first>
          <Grip />
          <DropButton type="button" aria-label="New chart"><IconNewChart /><Caret /></DropButton>
          <DropButton type="button" aria-label="Profiles"><IconProfiles /><Caret /></DropButton>
          <Divider />
          <ToolButton type="button" aria-label="Market Watch"><IconMarketWatch /></ToolButton>
          <ToolButton type="button" aria-label="Data Window"><IconDataWindow /></ToolButton>
          <ToolButton type="button" aria-label="Navigator"><IconNavigator /></ToolButton>
          <ToolButton type="button" aria-label="Terminal" $look="raised"><IconTerminal /></ToolButton>
          <ToolButton type="button" aria-label="Strategy Tester"><IconTester /></ToolButton>
          <Divider />
          <TextButton type="button"><IconNewOrder /><span>New Order</span></TextButton>
          <ToolButton type="button" aria-label="MetaEditor"><IconEditor /></ToolButton>
          <ToolButton type="button" aria-label="Virtual Hosting"><IconServer /></ToolButton>
          <ToolButton type="button" aria-label="Signals"><IconSignals /></ToolButton>
          <TextButton type="button"><IconAutoTrading /><span>AutoTrading</span></TextButton>
        </Band>
        <Band>
          <Grip />
          <ToolButton type="button" aria-label="Bar chart"><IconBars /></ToolButton>
          <ToolButton type="button" aria-label="Candlesticks" $look="pressed"><IconCandles /></ToolButton>
          <ToolButton type="button" aria-label="Line chart"><IconLine /></ToolButton>
          <Divider />
          <ToolButton type="button" aria-label="Zoom in" disabled><Magnifier on={false} /></ToolButton>
          <ToolButton type="button" aria-label="Zoom out"><Magnifier on /></ToolButton>
          <ToolButton type="button" aria-label="Tile windows"><IconTile /></ToolButton>
          <Divider />
          <ToolButton type="button" aria-label="Auto scroll" $look="pressed"><IconAutoScroll /></ToolButton>
          <ToolButton type="button" aria-label="Chart shift" $look="pressed"><IconShift /></ToolButton>
          <Divider />
          <DropButton type="button" aria-label="Indicators"><IconIndicators /><Caret /></DropButton>
          <DropButton type="button" aria-label="Periods"><IconPeriods /><Caret /></DropButton>
          <DropButton type="button" aria-label="Templates"><IconTemplates /><Caret /></DropButton>
        </Band>
        <Band>
          <Grip />
          {PERIODS.map(p => (
            <PeriodButton key={p} type="button" $look={p === 'M5' ? 'pressed' : undefined}>{p}</PeriodButton>
          ))}
        </Band>
        <Band $last>
          <Grip />
          <ToolButton type="button" aria-label="Cursor" $look="pressed"><IconCursor /></ToolButton>
          <ToolButton type="button" aria-label="Crosshair"><IconCross /></ToolButton>
          <Divider />
          <ToolButton type="button" aria-label="Vertical line"><IconVLine /></ToolButton>
          <ToolButton type="button" aria-label="Horizontal line"><IconHLine /></ToolButton>
          <ToolButton type="button" aria-label="Trendline"><IconTrend /></ToolButton>
          <ToolButton type="button" aria-label="Equidistant channel"><IconChannel /></ToolButton>
          <ToolButton type="button" aria-label="Fibonacci retracement" $w={36}><IconFibo /></ToolButton>
          <ToolButton type="button" aria-label="Search"><IconSearch /></ToolButton>
          <ToolButton type="button" aria-label="Alerts" $w={60}><IconAlerts /></ToolButton>
        </Band>
      </Toolbar>

      <WindowEdge>
        <ChartWindow>
          <Pane>
            <Plot>
              <PricePlot />
              <ChartTitle>
                <svg width="14" height="8" viewBox="0 0 14 8" shapeRendering="crispEdges" aria-hidden="true"><path d="M0 0h14v2h-2v2h-2v2h-2v2h-2v-2h-2v-2h-2v-2h-2z" /></svg>
                EURCHF,M5
              </ChartTitle>
              <PanelToggle type="button">C12-on</PanelToggle>
              <ShowButton type="button">Show</ShowButton>
            </Plot>
            <PriceScale />
          </Pane>
          <Pane $h={208}>
            <Plot><RsiPlot /></Plot>
            <ScaleLabels top={1112} items={[[1128, '52.5761'], [1131, '50'], [1189, '40'], [1247, '30'], [1305, '17.6644']]} />
          </Pane>
          <Pane $h={148} $last>
            <Plot><QqePlot /></Plot>
            <ScaleLabels top={1322} items={[[1337, '47.6135'], [1455, '39.0851']]} />
          </Pane>
          <TimeScale aria-label="Time scale">
            {TIMES.map((t, i) => (
              <g key={t} transform={`translate(${i * 128} 0)`}>
                <rect x="2" y="0" width="2" height="6" />
                <Caption x="-1" y="24">{t}</Caption>
              </g>
            ))}
          </TimeScale>
        </ChartWindow>
      </WindowEdge>

      <TabStrip>
        <Tab type="button">AUDCHF,M5</Tab>
        <Tab type="button" $active>EURCHF,M5</Tab>
        <Tab type="button">EURCHF,M1</Tab>
        <TabEnd />
        <TabScroll type="button" aria-label="Scroll tabs left"><svg width="6" height="12" viewBox="0 0 6 12"><path d="M6 0v12l-6-6z" fill="#999" /></svg></TabScroll>
        <TabScroll type="button" aria-label="Scroll tabs right"><svg width="6" height="12" viewBox="0 0 6 12"><path d="M0 0v12l6-6z" fill="#999" /></svg></TabScroll>
      </TabStrip>

      <StatusBar>
        <StatusCell $first>Terminal, Ctrl+T</StatusCell>
        <StatusCell $w={218}>M1 ULTIMATE 1</StatusCell>
        <StatusCell $w={202} />
        <StatusCell $w={144} />
        <StatusCell $w={142} />
        <StatusCell $w={138} />
        <StatusCell $w={142} />
        <StatusCell $w={132} />
        <StatusCell $w={246}><Traffic />365205/311 kb</StatusCell>
        <SizeGrip viewBox="0 0 32 32" aria-hidden="true">
          <path d="M0 32L32 0M8 32L32 8M16 32L32 16M24 32L32 24" stroke="#808080" strokeWidth="3" />
          <path d="M-3 32L32 -3M5 32L32 5M13 32L32 13M21 32L32 21" stroke="#fff" strokeWidth="2" />
        </SizeGrip>
      </StatusBar>
    </Shell>
  );
}
